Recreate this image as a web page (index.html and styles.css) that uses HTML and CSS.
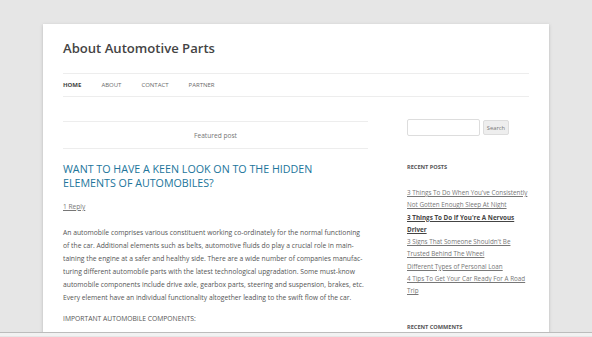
FILE: index.html
```html
<!DOCTYPE html>
<html lang="en">
<head>
    <meta charset="UTF-8">
    <meta name="viewport" content="width=device-width, initial-scale=1.0">
    <title>About Automotive Parts</title>
    <link rel="stylesheet" href="styles.css">
</head>
<body>
    <div class="screen">
        <div class="site">
            <header class="site-header">
                <h1 class="site-title">About Automotive Parts</h1>
                <nav class="main-nav">
                    <a href="#" class="current">Home</a>
                    <a href="#">About</a>
                    <a href="#">Contact</a>
                    <a href="#">Partner</a>
                </nav>
            </header>

            <div class="main">
                <div class="content">
                    <div class="featured-post">Featured post</div>
                    <h2 class="entry-title"><a href="#">Want to have a keen look on to the hidden elements of automobiles?</a></h2>
                    <a href="#" class="comments-link">1 Reply</a>
                    <div class="entry-content">
                        <p>An automobile comprises various constituent working co-ordinately for the normal functioning of the car. Additional elements such as belts, automotive fluids do play a crucial role in main&shy;taining the engine at a safer and healthy side. There are a wide number of companies manufac&shy;turing different automobile parts with the latest technological upgradation. Some must-know automobile components include drive axle, gearbox parts, steering and suspension, brakes, etc. Every element have an individual functionality altogether leading to the swift flow of the car.</p>
                        <p>IMPORTANT AUTOMOBILE COMPONENTS:</p>
                    </div>
                </div>

                <aside class="sidebar">
                    <form class="search-form">
                        <input type="text" class="search-field">
                        <button type="button" class="search-button">Search</button>
                    </form>

                    <div class="widget">
                        <h3 class="widget-title">Recent Posts</h3>
                        <ul>
                            <li><a href="#">3 Things To Do When You've Consistently Not Gotten Enough Sleep At Night</a></li>
                            <li><a href="#" class="current">3 Things To Do If You're A Nervous Driver</a></li>
                            <li><a href="#">3 Signs That Someone Shouldn't Be Trusted Behind The Wheel</a></li>
                            <li><a href="#">Different Types of Personal Loan</a></li>
                            <li><a href="#">4 Tips To Get Your Car Ready For A Road Trip</a></li>
                        </ul>
                    </div>

                    <div class="widget">
                        <h3 class="widget-title">Recent Comments</h3>
                    </div>
                </aside>
            </div>
        </div>
    </div>
    <div class="screen-edge"></div>
</body>
</html>
```

FILE: styles.css
```css
* {
    margin: 0;
    padding: 0;
    box-sizing: border-box;
}

body {
    font-family: "Open Sans", Arial, sans-serif;
    background-color: #e6e6e6;
    color: #444;
}

.screen {
    height: 333px;
    overflow: hidden;
    padding-top: 24px;
    border-bottom: 1px solid #bcbcbc;
}

.screen-edge {
    height: 3px;
    background: #f2f2f2;
}

.site {
    width: 506px;
    margin: 0 auto;
    min-height: 400px;
    padding: 0 20px;
    background: #fff;
    box-shadow: 0 1px 3px rgba(100, 100, 100, 0.35);
}

.site-header {
    padding-top: 15px;
}

.site-title {
    font-size: 13.1px;
    font-weight: 600;
    line-height: 18px;
    color: #444;
}

.main-nav {
    display: flex;
    gap: 20px;
    margin-top: 16px;
    height: 24px;
    align-items: center;
    border-top: 1px solid #ededed;
    border-bottom: 1px solid #ededed;
}

.main-nav a {
    font-size: 6px;
    text-transform: uppercase;
    color: #6a6a6a;
    text-decoration: none;
}

.main-nav a.current {
    font-weight: 700;
    color: #444;
}

.main {
    display: flex;
    padding-top: 24px;
}

.content {
    width: 305px;
}

.featured-post {
    height: 28px;
    line-height: 27px;
    text-align: center;
    font-size: 6.6px;
    color: #757575;
    border-top: 1px solid #ededed;
    border-bottom: 1px solid #ededed;
}

.entry-title {
    margin-top: 13px;
    padding-right: 10px;
    font-size: 10.7px;
    font-weight: 400;
    line-height: 14px;
    text-transform: uppercase;
}

.entry-title a {
    color: #21759b;
    text-decoration: none;
}

.comments-link {
    display: block;
    margin-top: 11px;
    font-size: 6.6px;
    line-height: 12px;
    color: #777;
}

.entry-content {
    margin-top: 13px;
}

.entry-content p {
    font-size: 6.75px;
    line-height: 13.1px;
    color: #555;
    margin-bottom: 7px;
}

.sidebar {
    width: 122px;
    margin-left: auto;
}

.search-form {
    display: flex;
    align-items: center;
    gap: 3px;
    margin-top: -2px;
}

.search-field {
    width: 73px;
    height: 17px;
    border: 1px solid #ddd;
    border-radius: 2px;
    background: #fff;
}

.search-button {
    width: 26px;
    height: 15px;
    font-family: inherit;
    font-size: 5.8px;
    color: #777;
    background: #eee;
    border: 1px solid #ddd;
    border-radius: 2px;
}

.widget {
    margin-top: 25px;
}

.widget-title {
    font-size: 5.6px;
    font-weight: 700;
    text-transform: uppercase;
    color: #555;
    line-height: 12px;
}

.widget ul {
    list-style: none;
    margin-top: 14px;
}

.widget li {
    font-size: 6.3px;
    line-height: 12.3px;
}

.widget li a {
    color: #777;
}

.widget li a.current {
    font-weight: 700;
    color: #444;
}

.widget + .widget {
    margin-top: 23px;
}
```
